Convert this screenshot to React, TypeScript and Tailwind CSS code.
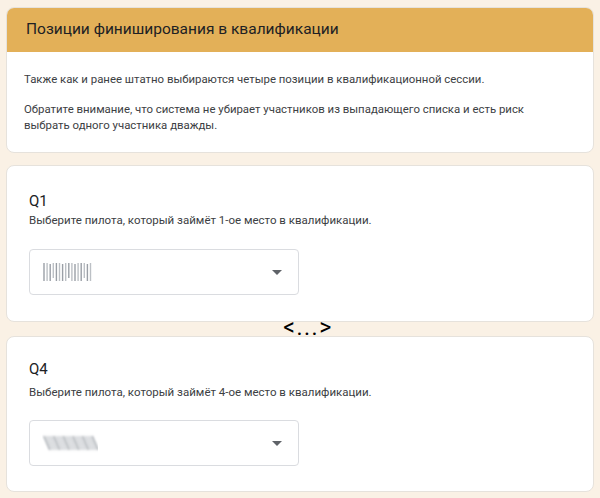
import React from 'react';

function BlurredName({ slant, id }: { slant?: boolean; id: string }) {
  const lines = Array.from({ length: 16 }, (_, i) => i);
  return (
    <svg width="56" height="22" viewBox="0 0 56 22">
      <defs>
        <filter id={id} x="-20%" y="-20%" width="140%" height="140%">
          <feGaussianBlur stdDeviation={slant ? 1 : 0.6} />
        </filter>
      </defs>
      <g filter={`url(#${id})`}>
        {lines.map(i =>
          slant ? (
            <line
              key={i}
              x1={2 + i * 3.2}
              y1={4}
              x2={8 + i * 3.2}
              y2={18}
              stroke={i % 3 === 0 ? '#a3a8ae' : '#c4c7cc'}
              strokeWidth="1.8"
            />
          ) : (
            <line
              key={i}
              x1={2 + i * 3.1}
              y1={i % 4 === 2 ? 3 : 2}
              x2={2 + i * 3.1}
              y2={i % 5 === 3 ? 17 : 20}
              stroke={i % 2 === 0 ? '#9a9fa6' : '#bcc0c5'}
              strokeWidth="1.4"
            />
          )
        )}
      </g>
    </svg>
  );
}

function Question({
  label,
  place,
  slant,
  top,
}: {
  label: string;
  place: string;
  slant?: boolean;
  top: 'q1' | 'q4';
}) {
  return (
    <div
      className={`bg-white rounded-lg border border-[#e6e2dc] px-[22px] ${
        top === 'q1' ? 'pt-[25px] pb-[26px]' : 'pt-[22px] pb-[25px]'
      }`}
    >
      <div className="text-[15px] text-[#202124] leading-[20px]">{label}</div>
      <div
        className={`text-[11.5px] text-[#3c4043] leading-[16px] ${
          top === 'q1' ? 'mt-[1px]' : 'mt-[5px]'
        }`}
      >
        Выберите пилота, который займёт {place} место в квалификации.
      </div>
      <div
        className={`w-[270px] h-[46px] border border-[#dadce0] rounded flex items-center justify-between pl-[12px] pr-[16px] ${
          top === 'q1' ? 'mt-[21px]' : 'mt-[20px]'
        }`}
      >
        <BlurredName slant={slant} id={`blur-${top}`} />
        <svg width="10" height="5" viewBox="0 0 10 5">
          <path d="M0 0h10L5 5z" fill="#5f6368" />
        </svg>
      </div>
    </div>
  );
}

export default function App() {
  return (
    <div
      className="min-h-[498px] bg-[#faf1e5] px-[6px] pt-[7px] pb-[7px] w-[600px]"
      style={{ fontFamily: 'Roboto, "Liberation Sans", sans-serif' }}
    >
      <div className="w-[588px]">
        <div className="bg-white rounded-lg border border-[#e6e2dc] overflow-hidden">
          <div className="bg-[#e3b058] h-[44px] flex items-center px-[19px]">
            <span className="text-[15.5px] text-[#202124]">Позиции финиширования в квалификации</span>
          </div>
          <div className="px-[17px] pt-[19px] pb-[19px] text-[11.4px] text-[#3c4043] leading-[16px]">
            <p>Также как и ранее штатно выбираются четыре позиции в квалификационной сессии.</p>
            <p className="mt-[14px]">
              Обратите внимание, что система не убирает участников из выпадающего списка и есть риск
              <br />
              выбрать одного участника дважды.
            </p>
          </div>
        </div>

        <div className="mt-[12px]">
          <Question label="Q1" place="1-ое" top="q1" />
        </div>

        <div className="h-[14px] flex justify-center items-center">
          <span className="text-[23px] text-black leading-none -mt-[3px] ml-[16px] tracking-[1.5px]">&lt;...&gt;</span>
        </div>

        <Question label="Q4" place="4-ое" slant top="q4" />
      </div>
    </div>
  );
}
